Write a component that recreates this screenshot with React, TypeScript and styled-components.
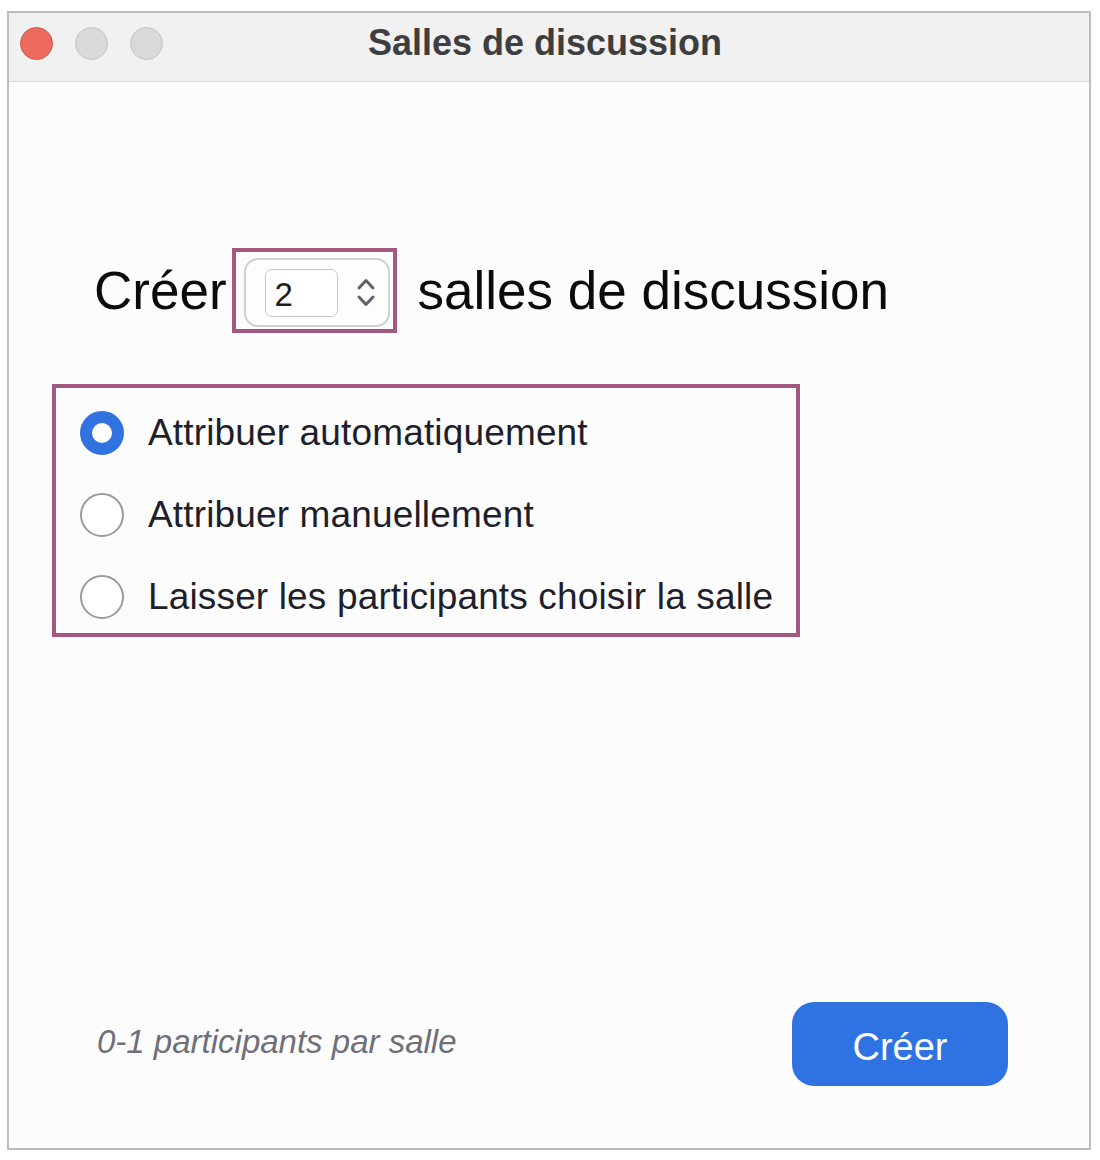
import React from "react";
import styled, { createGlobalStyle } from "styled-components";

const Global = createGlobalStyle`
  html, body { margin: 0; padding: 0; background: #ffffff; }
  body { font-family: "Liberation Sans", Arial, sans-serif; }
  * { box-sizing: border-box; }
`;

const Window = styled.div`
  margin: 11px 0 0 7px;
  width: 1084px;
  height: 1139px;
  border: 2px solid #bdbdbd;
  background: #fcfcfc;
  display: flex;
  flex-direction: column;
`;

const TitleBar = styled.div`
  height: 69px;
  padding: 0 11px 8px 11px;
  background: #f1f1f1;
  border-bottom: 1px solid #d7d7d7;
  display: grid;
  grid-template-columns: 1fr auto 1fr;
  align-items: center;
`;

const Lights = styled.div`
  display: flex;
  gap: 22px;
`;

const Light = styled.span<{ $red?: boolean }>`
  width: 33px;
  height: 33px;
  border-radius: 50%;
  background: ${(p) => (p.$red ? "#ec6a5e" : "#d9d9d9")};
  border: 1px solid ${(p) => (p.$red ? "#d2524a" : "#c3c3c3")};
`;

const Title = styled.div`
  font-size: 36px;
  font-weight: 700;
  color: #3e3e3e;
  margin-right: 8px;
`;

const Body = styled.div`
  flex: 1;
  display: flex;
  flex-direction: column;
`;

const CountRow = styled.div`
  margin: 166px 0 0 85px;
  display: flex;
  align-items: center;
`;

const BigText = styled.span`
  font-size: 53px;
  color: #0b0b0b;
  line-height: 1;
`;

const Highlight = styled.div`
  border: 4px solid #a2587f;
`;

const CountHighlight = styled(Highlight)`
  margin: 0 21px 0 5px;
  width: 165px;
  height: 85px;
  padding: 6px 3px 2px 8px;
`;

const Stepper = styled.div`
  width: 146px;
  height: 69px;
  border: 2px solid #cfcfd7;
  border-radius: 14px;
  display: flex;
  align-items: center;
  padding-left: 19px;
  background: #fdfdfd;
`;

const NumberInput = styled.div`
  width: 73px;
  height: 48px;
  border: 1.5px solid #c5c5d3;
  border-radius: 7px;
  background: #ffffff;
  display: flex;
  align-items: center;
  padding: 4px 0 0 9px;
  font-size: 33px;
  color: #1c1c1c;
`;

const Arrows = styled.svg`
  margin-left: 18px;
  width: 20px;
  height: 34px;
`;

const RadioBox = styled(Highlight)`
  margin: 51px 0 0 43px;
  width: 748px;
  height: 253px;
  padding: 9px 23px 0 24px;
  display: flex;
  flex-direction: column;
  gap: 10px;
`;

const Option = styled.label`
  height: 72px;
  display: flex;
  align-items: center;
  gap: 24px;
  font-size: 37px;
  letter-spacing: 0.15px;
  color: #1f1f2b;
  white-space: nowrap;
`;

const Radio = styled.span<{ $on?: boolean }>`
  flex: none;
  width: 44px;
  height: 44px;
  border-radius: 50%;
  background: #ffffff;
  border: ${(p) => (p.$on ? "12px solid #2f72e0" : "2.5px solid #9b9b9b")};
`;

const Footer = styled.div`
  margin-top: auto;
  padding: 0 81px 62px 88px;
  display: flex;
  align-items: center;
  justify-content: space-between;
`;

const Hint = styled.span`
  font-size: 33px;
  font-style: italic;
  color: #6f6f79;
  margin-top: -5px;
`;

const CreateButton = styled.button`
  width: 216px;
  height: 84px;
  border: none;
  border-radius: 22px;
  background: #2f72e2;
  color: #ffffff;
  font-family: "Liberation Sans", Arial, sans-serif;
  font-size: 38px;
  padding: 6px 0 0 0;
`;

const options = [
  { label: "Attribuer automatiquement", on: true },
  { label: "Attribuer manuellement", on: false },
  { label: "Laisser les participants choisir la salle", on: false },
];

export default function App() {
  return (
    <>
      <Global />
      <Window>
        <TitleBar>
          <Lights>
            <Light $red />
            <Light />
            <Light />
          </Lights>
          <Title>Salles de discussion</Title>
          <span />
        </TitleBar>
        <Body>
          <CountRow>
            <BigText>Créer</BigText>
            <CountHighlight>
              <Stepper>
                <NumberInput>2</NumberInput>
                <Arrows viewBox="0 0 20 34" fill="none" stroke="#62626e" strokeWidth="3" strokeLinecap="round" strokeLinejoin="round">
                  <path d="M3 12 L10 4.5 L17 12" />
                  <path d="M3 21 L10 28.5 L17 21" />
                </Arrows>
              </Stepper>
            </CountHighlight>
            <BigText>salles de discussion</BigText>
          </CountRow>
          <RadioBox>
            {options.map((o) => (
              <Option key={o.label}>
                <Radio $on={o.on} />
                {o.label}
              </Option>
            ))}
          </RadioBox>
          <Footer>
            <Hint>0-1 participants par salle</Hint>
            <CreateButton>Créer</CreateButton>
          </Footer>
        </Body>
      </Window>
    </>
  );
}
